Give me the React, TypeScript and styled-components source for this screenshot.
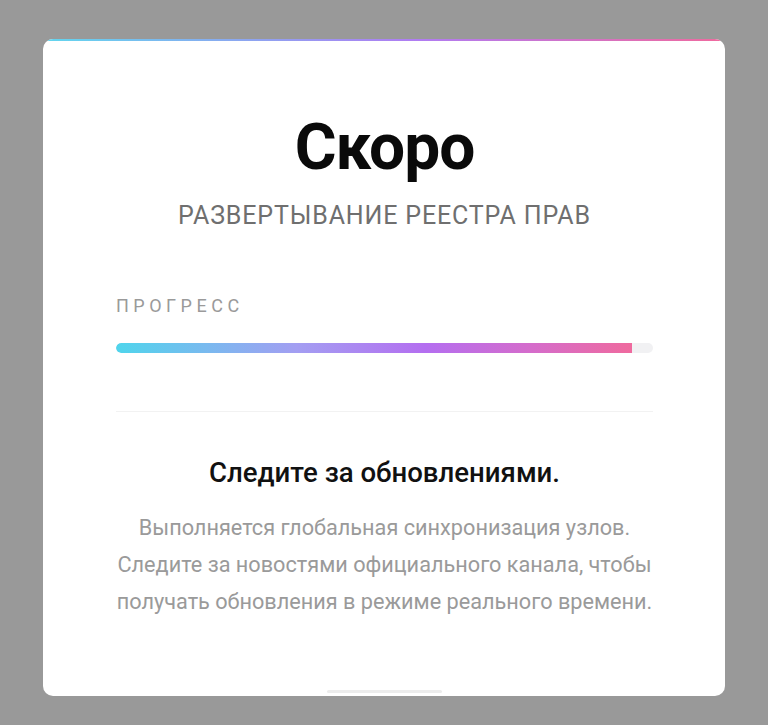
import styled, { createGlobalStyle } from 'styled-components';

const GlobalStyle = createGlobalStyle`
    html, body {
        margin: 0;
        padding: 0;
        background: #999999;
        font-family: Roboto, "Noto Sans", "Liberation Sans", sans-serif;
    }
`;

const Page = styled.div`
    width: 768px;
    height: 725px;
    box-sizing: border-box;
    padding-top: 39px;
    display: flex;
    justify-content: center;
    align-items: flex-start;
`;

const Card = styled.div`
    width: 682px;
    height: 657px;
    background: #ffffff;
    border-radius: 10px;
    overflow: hidden;
    display: flex;
    flex-direction: column;
    align-items: center;
`;

const TopStripe = styled.div`
    width: 100%;
    height: 2px;
    flex-shrink: 0;
    background: linear-gradient(90deg, #62d6ee 0%, #b07cf2 55%, #f06a9e 100%);
`;

const Body = styled.div`
    width: 100%;
    box-sizing: border-box;
    padding: 0 72px 0 73px;
    display: flex;
    flex-direction: column;
    align-items: center;
`;

const Title = styled.h1`
    margin: 75px 0 0 0;
    font-size: 64px;
    line-height: 1;
    font-weight: 700;
    letter-spacing: -1px;
    color: #0a0a0a;
`;

const Subtitle = styled.div`
    margin-top: 23px;
    font-size: 25px;
    line-height: 1;
    letter-spacing: 0.85px;
    color: #6f6f6f;
`;

const Progress = styled.div`
    width: 100%;
    margin-top: 69px;
`;

const ProgressLabel = styled.div`
    font-size: 18px;
    line-height: 1;
    letter-spacing: 4.5px;
    color: #9a9a9a;
    font-weight: 400;
`;

const Track = styled.div`
    margin-top: 28px;
    width: 100%;
    height: 10px;
    border-radius: 5px;
    background: #f1f1f3;
    overflow: hidden;
`;

const Fill = styled.div`
    height: 100%;
    border-radius: 5px 0 0 5px;
    background: linear-gradient(90deg, #4fd5ec 0%, #a39ef2 35%, #b46ef0 60%, #d46ccc 80%, #ef6a9e 100%);
`;

const Divider = styled.hr`
    width: 100%;
    margin: 58px 0 0 0;
    border: none;
    border-top: 1px solid #f2f2f2;
`;

const Heading = styled.h2`
    margin: 47px 0 0 0;
    font-size: 27.6px;
    line-height: 1;
    font-weight: 500;
    color: #111111;
`;

const Text = styled.p`
    margin: 22px 0 0 0;
    font-size: 21.7px;
    line-height: 37px;
    color: #9a9a9a;
    text-align: center;
    white-space: nowrap;
`;

const BottomBar = styled.div`
    margin-top: auto;
    margin-bottom: 3px;
    width: 115px;
    height: 3px;
    border-radius: 2px;
    background: #ececec;
`;

export default function App() {
    const progress = 96;

    return (
        <>
            <GlobalStyle />
            <Page>
                <Card>
                    <TopStripe />
                    <Body>
                        <Title>Скоро</Title>
                        <Subtitle>РАЗВЕРТЫВАНИЕ РЕЕСТРА ПРАВ</Subtitle>

                        <Progress>
                            <ProgressLabel>ПРОГРЕСС</ProgressLabel>
                            <Track>
                                <Fill style={{ width: `${progress}%` }} />
                            </Track>
                        </Progress>

                        <Divider />

                        <Heading>Следите за обновлениями.</Heading>
                        <Text>
                            Выполняется глобальная синхронизация узлов.
                            <br />
                            Следите за новостями официального канала, чтобы
                            <br />
                            получать обновления в режиме реального времени.
                        </Text>
                    </Body>
                    <BottomBar />
                </Card>
            </Page>
        </>
    );
}
